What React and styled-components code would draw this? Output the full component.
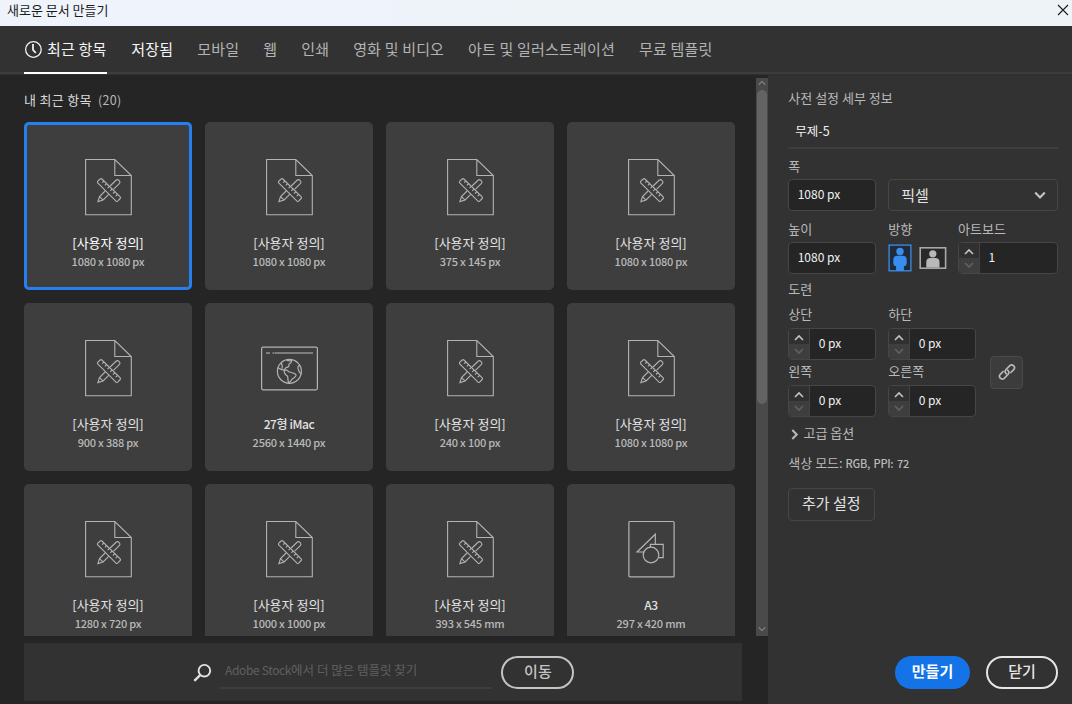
import React from "react";
import styled, { createGlobalStyle } from "styled-components";

const GlobalStyle = createGlobalStyle`
  *, *::before, *::after { box-sizing: border-box; }
  body { margin: 0; background: #252525; overflow: hidden; }
  button { font: inherit; color: inherit; padding: 0; margin: 0; border: 0; background: none; }
  svg { display: block; flex: none; }
`;

const Window = styled.div`
  width: 1072px;
  height: 704px;
  display: flex;
  flex-direction: column;
  overflow: hidden;
  background: #252525;
  color: #b9b9b9;
  font-family: "Noto Sans CJK KR", "Noto Sans", sans-serif;
  font-size: 13px;
  line-height: 18px;
  white-space: nowrap;
`;

const TitleBar = styled.header`
  height: 26px;
  flex: none;
  display: flex;
  justify-content: space-between;
  padding: 1px 3px 0 7px;
  background: linear-gradient(90deg, #eff3fc 0 32%, #edf3f7 50%);
  color: #1b1b1b;
  svg { margin-top: 3px; }
`;

const TabBar = styled.nav`
  height: 49px;
  flex: none;
  display: flex;
  padding-left: 24px;
  background: linear-gradient(#323232 46px, #3d3d3d 46px 48px, #303030 48px);
`;

const Tab = styled.button`
  height: 48px;
  display: flex;
  align-items: center;
  gap: 5px;
  margin-right: 24px;
  font-size: 15px;
  letter-spacing: 0.18px;
  color: ${(p) => (p.$bright ? "#f5f5f5" : "#b3b3b3")};
  border-bottom: 2px solid ${(p) => (p.$active ? "#ffffff" : "transparent")};
  &:first-child { padding-right: 0.8px; }
`;

const Body = styled.div`
  flex: 1;
  min-height: 0;
  display: flex;
`;

const Browser = styled.main`
  width: 768px;
  display: flex;
  flex-direction: column;
`;

const ListArea = styled.div`
  height: 561px;
  flex: none;
  display: flex;
  justify-content: space-between;
  overflow: hidden;
`;

const Recent = styled.section`
  padding: 16px 0 0 24px;
`;

const RecentTitle = styled.h2`
  height: 31px;
  margin: 0;
  font-size: 13px;
  font-weight: 400;
  letter-spacing: 0.3px;
  color: #d8d8d8;
  span { margin-left: 3px; font-size: 12.5px; color: #b9b9b9; }
`;

const CardGrid = styled.div`
  display: grid;
  grid-template-columns: repeat(4, 168px);
  grid-auto-rows: 168px;
  gap: 13px;
`;

const Card = styled.article`
  display: flex;
  flex-direction: column;
  align-items: center;
  padding-top: 36px;
  border-radius: 5px;
  background: #3e3e3e;
  box-shadow: ${(p) => (p.$selected ? "inset 0 0 0 3px #2480ee" : "none")};
`;

const CardIcon = styled.div`
  height: 58px;
  display: flex;
  align-items: center;
`;

const CardName = styled.div`
  margin-top: 18px;
  font-weight: ${(p) => (p.$latin ? 500 : 400)};
  font-size: ${(p) => (p.$latin ? 12 : 13)}px;
  letter-spacing: ${(p) => (p.$latin ? -0.4 : 0)}px;
  color: ${(p) => (p.$selected ? "#ffffff" : "#e2e2e2")};
`;

const CardSize = styled.div`
  font-size: 11px;
  letter-spacing: -0.22px;
  color: #b9b9b9;
  font-weight: 500;
`;

const ScrollTrack = styled.div`
  width: 12px;
  margin-top: 3px;
  display: flex;
  flex-direction: column;
  align-items: center;
  justify-content: space-between;
  padding: 1px 0 3px;
  background: #4a4a4a;
`;

const ScrollThumb = styled.div`
  width: 10px;
  height: 314px;
  margin: 3px 0 auto;
  border-radius: 5px;
  background: #636363;
`;

const StockBar = styled.form`
  width: 718px;
  height: 58px;
  margin: 7px 0 0 24px;
  display: flex;
  align-items: flex-start;
  padding: 13px 0 0 169px;
  background: #323232;
`;

const StockField = styled.div`
  width: 273px;
  height: 33px;
  margin: 0 9.4px 0 7px;
  padding: 5px 0 0 6px;
  border-bottom: 2px solid #3e3e3e;
  font-size: 12.5px;
  color: #606060;
  span { font-size: 12px; letter-spacing: -0.35px; }
`;

const Pill = styled.button`
  width: ${(p) => p.$width}px;
  height: 33px;
  border-radius: 17px;
  font-size: 15px;
  line-height: 20px;
  padding-bottom: 3px;
  font-weight: ${(p) => (p.$primary ? 700 : 500)};
  color: ${(p) => (p.$muted ? "#c4c4c4" : p.$primary ? "#ffffff" : "#e6e6e6")};
  background: ${(p) => (p.$primary ? "#1473e6" : "transparent")};
  border: ${(p) => (p.$primary ? "0" : "2px solid currentColor")};
`;

const Details = styled.aside`
  width: 304px;
  display: flex;
  flex-direction: column;
  padding: 14px 14px 15px 20.3px;
  background: #323232;
`;

const NameField = styled.div`
  height: 41px;
  margin-top: 1px;
  padding: 14px 0 0 7px;
  border-bottom: 2px solid #3e3e3e;
  font-size: 12.5px;
  color: #f0f0f0;
`;

const Row = styled.div`
  display: flex;
  margin-top: ${(p) => p.$top}px;
`;

const Label = styled.div`
  width: ${(p) => p.$width ?? 100}px;
  height: 18px;
`;

const Field = styled.div`
  width: ${(p) => p.$width ?? 88}px;
  height: 32px;
  margin-right: ${(p) => p.$gap ?? 12}px;
  display: flex;
  align-items: center;
  overflow: hidden;
  border: 1px solid #464646;
  border-radius: 4px;
  background: #252525;
  color: #f2f2f2;
  font-size: 12px;
`;

const FieldText = styled.span`
  padding: 0 0 2px 8.4px;
`;

const Stepper = styled.div`
  width: 21px;
  height: 30px;
  flex: none;
  border-right: 1px solid #434343;
`;

const Step = styled.div`
  height: 15px;
  display: grid;
  place-items: center;
  padding-top: ${(p) => (p.$off ? 0 : 3)}px;
  padding-bottom: ${(p) => (p.$off ? 2 : 0)}px;
  color: ${(p) => (p.$off ? "#606060" : "#c4c4c4")};
  background: ${(p) => (p.$off ? "#3e3e3e" : "#303030")};
`;

const Select = styled.div`
  width: 170px;
  height: 32px;
  display: flex;
  align-items: center;
  justify-content: space-between;
  padding: 0 11px 1px 12px;
  border: 1px solid #464646;
  border-radius: 4px;
  color: #e2e2e2;
  font-size: 15px;
`;

const Orientation = styled.div`
  width: 70px;
  display: flex;
  align-items: center;
  gap: 6.5px;
`;

const Bleed = styled.div`
  display: flex;
  align-items: center;
  margin-top: 7px;
`;

const BleedFields = styled.div`
  width: 201.8px;
`;

const LinkButton = styled.button`
  width: 33px;
  height: 33px;
  margin-top: 22px;
  display: grid;
  place-items: center;
  border: 1px solid #4a4a4a;
  border-radius: 4px;
  background: #3c3c3c;
`;

const Disclosure = styled.div`
  display: flex;
  align-items: center;
  gap: 3.5px;
  margin-top: 7px;
  padding-left: 0.7px;
  svg { margin-top: 2px; }
`;

const Mode = styled.div`
  margin-top: 12px;
  span { font-size: 11px; font-weight: 500; letter-spacing: -0.3px; word-spacing: 1.5px; }
`;

const MoreButton = styled.button`
  width: 87px;
  height: 33px;
  flex: none;
  margin-top: 16px;
  padding: 0 1px 3px 0;
  border: 1px solid #464646;
  border-radius: 4px;
  color: #e2e2e2;
  font-size: 15px;
`;

const Actions = styled.footer`
  margin-top: auto;
  display: flex;
  justify-content: flex-end;
  gap: 16px;
`;

const Chevron = ({ dir = "down", size = 10, weight = 1.6, color = "currentColor" }) => {
  const turn = { down: 0, up: 180, right: -90 }[dir];
  return (
    <svg width={size} height={size} viewBox="0 0 10 10" fill="none" stroke={color} strokeWidth={weight}>
      <path d="M1 3l4 4 4-4" transform={`rotate(${turn} 5 5)`} />
    </svg>
  );
};

const CloseIcon = () => (
  <svg width="12" height="12" viewBox="0 0 12 12" stroke="#1b1b1b" strokeWidth="1.1">
    <path d="M1 1l10 10M11 1L1 11" />
  </svg>
);

const ClockIcon = () => (
  <svg width="18" height="18" viewBox="0 0 18 18" fill="none" stroke="#f0f0f0" strokeWidth="1.3">
    <circle cx="9.4" cy="9.5" r="7.8" />
    <path d="M9 4v6l2.8 2.8" strokeWidth="1.8" />
  </svg>
);

const DocumentIcon = () => (
  <svg width="48" height="58" viewBox="0 0 48 58" fill="none" stroke="#b3b3b3" strokeWidth="1.1">
    <path d="M1.6 1.5h29.2l16.5 16v39.2H1.6z M30.8 1.5v16h16.5" />
    <g transform="translate(.6 .4)">
      <path d="M25.5 27.6l6.2-6q1.3-.9 2.6.4l.6.6q1 1.2 0 2.4L28.8 31 M20.5 32.6l-5.6 5.6-1.6 5 5.2-1.6 5.6-5.6 M14.9 38.2l3.6 3.6" />
      <path d="M17.3 20.6l18.3 17.9q.7.9 0 1.6l-2.6 2.6q-.8.7-1.6 0l-18.3-18.1q-.7-1 .1-1.8l2.4-2.2q.9-.7 1.7 0z" />
      <path d="M19.3 22.6l-1.7 1.7M22 25.3l-1.7 1.7M24.7 28l-1.7 1.7M27.4 30.7l-1.7 1.7M30.1 33.4l-1.7 1.7M32.8 36.1l-1.7 1.7" />
    </g>
  </svg>
);

const BrowserIcon = () => (
  <svg width="58" height="46" viewBox="0 0 58 46" fill="none" stroke="#b3b3b3" strokeWidth="1.2">
    <rect x="1.6" y="2.2" width="55.8" height="42.6" rx="1.5" />
    <path d="M6 8h4M12.5 8h1.5M14.5 8h38.5" strokeWidth="1.5" stroke="#949494" />
    <g transform="translate(.4 0)">
      <circle cx="29" cy="26.3" r="12" />
      <path d="M26 14.8q2.5 2 5.5.5-.2 2.5-3 4 .8 2.8-2.8 3.2l-1.8 2.2M17.5 22.8q4.5 2.7 6.4 2l2.8.4q1 2 4.3 2.3 5.5 1.3 4.5 3.3-1.5 2.5-3.5 3-1.5 3-4 4.2M20.5 17.8q2 2.3 1 5.8M23.9 24.8q-.8 3.5 3.3 6.5.5 3.8.8 7M39.8 20.8q-3-.8-2 3.3.4 2.3 2.8 5" />
    </g>
  </svg>
);

const ArtIcon = () => (
  <svg width="48" height="58" viewBox="0 0 48 58" fill="none" stroke="#b3b3b3" strokeWidth="1.2">
    <rect x="1.9" y="1.5" width="45.2" height="55.4" rx="1" />
    <path d="M17 32h-7l18.3-17.8v10.2M23.4 27.5v-3.1h12.8v13.3h-4.4" />
    <circle cx="24" cy="35" r="7.8" />
  </svg>
);

const SearchIcon = () => (
  <svg width="19" height="19" viewBox="0 0 19 19" fill="none" stroke="#e2e2e2" strokeWidth="1.9">
    <circle cx="11.4" cy="7.7" r="5.8" />
    <path d="M7.4 11.9L1.3 17.8" strokeWidth="2.3" />
  </svg>
);

const SearchSlot = styled.div`
  padding-top: 7px;
`;

const PortraitIcon = () => (
  <svg width="24" height="28" viewBox="0 0 24 28">
    <rect x="1.1" y="1.1" width="21.8" height="25.7" fill="#1f2b39" stroke="#3b8eea" strokeWidth="1.3" />
    <circle cx="12" cy="7.5" r="3.7" fill="#378ef0" />
    <path d="M9.3 11.7h5.4q4 0 4 4v4q0 2-2.8 2.6V27H8.1v-4.7q-2.8-.6-2.8-2.6v-4q0-4 4-4z" fill="#378ef0" />
  </svg>
);

const LandscapeIcon = () => (
  <svg width="28" height="24" viewBox="0 0 28 24">
    <rect x="1.2" y="1.8" width="25.4" height="20.4" fill="#292929" stroke="#a8a8a8" strokeWidth="1.6" />
    <circle cx="13.8" cy="7.8" r="3.6" fill="#b9b9b9" />
    <path d="M11.5 12h4.8q4.2 0 4.2 4v5.5H7.3V16q0-4 4.2-4z" fill="#b9b9b9" />
  </svg>
);

const LinkIcon = () => (
  <svg width="18" height="18" viewBox="0 0 18 18" fill="none" stroke="#b9b9b9" strokeWidth="1.7" strokeLinecap="round">
    <path d="M8.4 10.8q-2.4-2.1-.4-4.3l3.8-3.8q2-1.6 3.9.1 1.7 2 0 3.9l-2.8 2.8" />
    <path d="M9.6 7.2q2.4 2.1.4 4.3l-3.8 3.8q-2 1.6-3.9-.1-1.7-2 0-3.9l2.8-2.8" />
  </svg>
);

const icons = { doc: DocumentIcon, browser: BrowserIcon, art: ArtIcon };
const custom = (size) => ({ name: "[사용자 정의]", size, icon: "doc" });

const presets = [
  { ...custom("1080 x 1080 px"), selected: true },
  custom("1080 x 1080 px"),
  custom("375 x 145 px"),
  custom("1080 x 1080 px"),
  custom("900 x 388 px"),
  { name: "27형 iMac", size: "2560 x 1440 px", icon: "browser", latin: true },
  custom("240 x 100 px"),
  custom("1080 x 1080 px"),
  custom("1280 x 720 px"),
  custom("1000 x 1000 px"),
  custom("393 x 545 mm"),
  { name: "A3", size: "297 x 420 mm", icon: "art", latin: true },
];

const PresetCard = ({ preset }) => {
  const Icon = icons[preset.icon];
  return (
    <Card $selected={preset.selected}>
      <CardIcon><Icon /></CardIcon>
      <CardName $latin={preset.latin} $selected={preset.selected}>{preset.name}</CardName>
      <CardSize>{preset.size}</CardSize>
    </Card>
  );
};

const NumberField = ({ value, width, gap }) => (
  <Field $width={width} $gap={gap}>
    <Stepper>
      <Step><Chevron dir="up" /></Step>
      <Step $off><Chevron /></Step>
    </Stepper>
    <FieldText>{value}</FieldText>
  </Field>
);

export default function App() {
  return (
    <Window>
      <GlobalStyle />
      <TitleBar>
        <span>새로운 문서 만들기</span>
        <CloseIcon />
      </TitleBar>
      <TabBar>
        <Tab $active $bright><ClockIcon />최근 항목</Tab>
        <Tab $bright>저장됨</Tab>
        <Tab>모바일</Tab>
        <Tab>웹</Tab>
        <Tab>인쇄</Tab>
        <Tab>영화 및 비디오</Tab>
        <Tab>아트 및 일러스트레이션</Tab>
        <Tab>무료 템플릿</Tab>
      </TabBar>
      <Body>
        <Browser>
          <ListArea>
            <Recent>
              <RecentTitle>내 최근 항목 <span>(20)</span></RecentTitle>
              <CardGrid>
                {presets.map((preset, i) => <PresetCard key={i} preset={preset} />)}
              </CardGrid>
            </Recent>
            <ScrollTrack>
              <Chevron dir="up" size={8} weight={1.3} color="#8a8a8a" />
              <ScrollThumb />
              <Chevron size={8} weight={1.3} color="#8a8a8a" />
            </ScrollTrack>
          </ListArea>
          <StockBar>
            <SearchSlot><SearchIcon /></SearchSlot>
            <StockField><span>Adobe Stock</span>에서 더 많은 템플릿 찾기</StockField>
            <Pill type="button" $width={73} $muted>이동</Pill>
          </StockBar>
        </Browser>
        <Details>
          <Label>사전 설정 세부 정보</Label>
          <NameField>무제-5</NameField>
          <Row $top={8}><Label>폭</Label></Row>
          <Row $top={4}>
            <Field><FieldText>1080 px</FieldText></Field>
            <Select>픽셀<Chevron size={12} weight={1.8} color="#c4c4c4" /></Select>
          </Row>
          <Row $top={9}>
            <Label>높이</Label>
            <Label $width={70}>방향</Label>
            <Label>아트보드</Label>
          </Row>
          <Row $top={4}>
            <Field><FieldText>1080 px</FieldText></Field>
            <Orientation><PortraitIcon /><LandscapeIcon /></Orientation>
            <NumberField value="1" width={100} gap={0} />
          </Row>
          <Row $top={6}><Label>도련</Label></Row>
          <Bleed>
            <BleedFields>
              <Row $top={0}><Label>상단</Label><Label>하단</Label></Row>
              <Row $top={5}><NumberField value="0 px" /><NumberField value="0 px" /></Row>
              <Row $top={2}><Label>왼쪽</Label><Label>오른쪽</Label></Row>
              <Row $top={5}><NumberField value="0 px" /><NumberField value="0 px" /></Row>
            </BleedFields>
            <LinkButton><LinkIcon /></LinkButton>
          </Bleed>
          <Disclosure><Chevron dir="right" size={11} weight={1.9} />고급 옵션</Disclosure>
          <Mode>색상 모드: <span>RGB, PPI: 72</span></Mode>
          <MoreButton>추가 설정</MoreButton>
          <Actions>
            <Pill $width={75} $primary>만들기</Pill>
            <Pill $width={72}>닫기</Pill>
          </Actions>
        </Details>
      </Body>
    </Window>
  );
}
